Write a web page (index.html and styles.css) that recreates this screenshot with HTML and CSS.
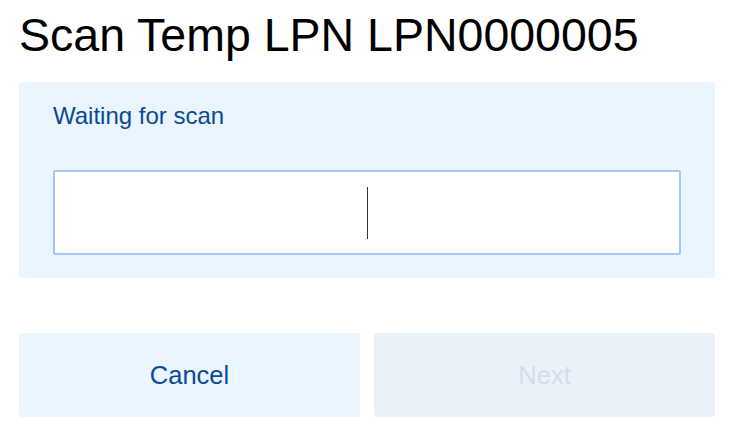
FILE: index.html
```html
<!DOCTYPE html>
<html lang="en">
<head>
    <meta charset="UTF-8">
    <meta name="viewport" content="width=device-width, initial-scale=1.0">
    <title>Scan Temp LPN</title>
    <link rel="stylesheet" href="styles.css">
</head>
<body>

    <h1 class="title">Scan Temp LPN LPN0000005</h1>

    <!-- Scan panel -->
    <div class="scan-panel">
        <div class="scan-label">Waiting for scan</div>
        <div class="scan-input">
            <span class="caret"></span>
        </div>
    </div>

    <div class="actions">
        <button class="btn btn-cancel">Cancel</button>
        <button class="btn btn-next" disabled>Next</button>
    </div>

</body>
</html>
```

FILE: styles.css
```css
body {
    margin: 0;
    padding: 0 16px 0 19px;
    font-family: 'Liberation Sans', Arial, sans-serif;
    background: white;
    color: black;
}

.title {
    margin: 0;
    padding-top: 9px;
    font-size: 46.5px;
    font-weight: normal;
    line-height: 52px;
    white-space: nowrap;
}

/* Scan panel */
.scan-panel {
    margin-top: 21px;
    background-color: #ebf5ff;
    border-radius: 3px;
    padding: 20px 34px 23px 34px;
}

.scan-label {
    color: #0b4a92;
    font-size: 24px;
    line-height: 28px;
}

.scan-input {
    margin-top: 40px;
    height: 81px;
    background: white;
    border: 2px solid #a3c6fd;
    border-radius: 2px;
    display: flex;
    justify-content: center;
    align-items: center;
}

.caret {
    display: block;
    width: 1px;
    height: 52px;
    background-color: #333;
}

/* Buttons */
.actions {
    margin-top: 55px;
    display: grid;
    grid-template-columns: 1fr 1fr;
    gap: 14px;
}

.btn {
    height: 84px;
    border: none;
    border-radius: 3px;
    font-family: 'Liberation Sans', Arial, sans-serif;
    font-size: 25.5px;
    cursor: pointer;
}

.btn-cancel {
    background-color: #eaf5ff;
    color: #0b4a96;
}

.btn-next {
    background-color: #eaf1f9;
    color: #d2deea;
    cursor: default;
}
```
